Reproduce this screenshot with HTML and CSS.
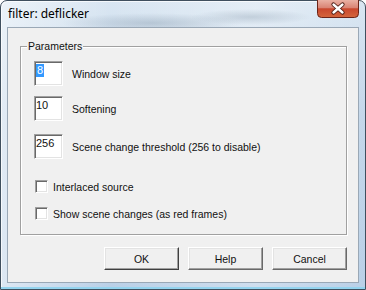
FILE: index.html
```html
<!DOCTYPE html>
<html lang="en">
<head>
  <meta charset="UTF-8" />
  <title>filter: deflicker</title>
  <link rel="stylesheet" href="styles.css">
</head>
<body>
  <div class="window">
    <div class="titlebar">
      <span class="title">filter: deflicker</span>
      <div class="close">
        <svg width="42" height="18" viewBox="0 0 42 18">
          <defs>
            <linearGradient id="red" x1="0" y1="0" x2="0" y2="1">
              <stop offset="0" stop-color="#eab1a4" />
              <stop offset="0.45" stop-color="#d98373" />
              <stop offset="0.5" stop-color="#c9472e" />
              <stop offset="1" stop-color="#d4663c" />
            </linearGradient>
          </defs>
          <path d="M0.5 0 V13.5 Q0.5 17.5 4.5 17.5 H37.5 Q41.5 17.5 41.5 13.5 V0" fill="url(#red)" stroke="#6b2418" />
          <path d="M16.5 4.5 L25.5 12.5 M25.5 4.5 L16.5 12.5" stroke="#4a1a12" stroke-width="4.2" stroke-linecap="round" fill="none" />
          <path d="M16.5 4.5 L25.5 12.5 M25.5 4.5 L16.5 12.5" stroke="#ffffff" stroke-width="2.4" stroke-linecap="round" fill="none" />
        </svg>
      </div>
    </div>

    <div class="client">
      <div class="group">
        <span class="legend">Parameters</span>

        <div class="row row-first">
          <div class="edit"><span class="sel">8</span></div>
          <span class="label">Window size</span>
        </div>
        <div class="row row-second">
          <div class="edit">10</div>
          <span class="label">Softening</span>
        </div>
        <div class="row row-third">
          <div class="edit">256</div>
          <span class="label">Scene change threshold (256 to disable)</span>
        </div>

        <div class="check check-first">
          <div class="box"></div>
          <span>Interlaced source</span>
        </div>
        <div class="check check-second">
          <div class="box"></div>
          <span>Show scene changes (as red frames)</span>
        </div>
      </div>

      <div class="buttons">
        <button class="button default">OK</button>
        <button class="button">Help</button>
        <button class="button">Cancel</button>
      </div>
    </div>
  </div>
</body>
</html>
```

FILE: styles.css
```css
body {
  margin: 0;
  width: 366px;
  height: 290px;
  overflow: hidden;
  font-family: 'Liberation Sans', Arial, sans-serif;
  font-size: 10.5px;
  color: #111;
}
.window {
  box-sizing: border-box;
  height: 290px;
  display: flex;
  flex-direction: column;
  border: 1px solid #3f4f5e;
  border-radius: 7px 7px 0 0;
  background:
    radial-gradient(ellipse 90px 10px at 150px 22px, rgba(120,140,160,0.35), transparent),
    radial-gradient(ellipse 60px 8px at 250px 16px, rgba(120,140,160,0.3), transparent),
    linear-gradient(to right, rgba(255,255,255,0.5), rgba(255,255,255,0) 30%, rgba(255,255,255,0.3) 70%, rgba(255,255,255,0)),
    linear-gradient(to bottom, #d9e6f2, #c4d7ea 40%, #bad0e7);
  box-shadow: inset 0 -2px 0 #93d3ee, inset 1px 1px 0 rgba(255,255,255,0.7);
}
.titlebar {
  height: 26px;
  display: flex;
  justify-content: space-between;
  align-items: flex-start;
  padding-left: 7px;
  padding-right: 6px;
}
.title {
  font-family: 'Noto Sans', 'Open Sans', sans-serif;
  font-size: 12px;
  line-height: 26px;
  color: #000;
}
.close {
  margin-top: -1px;
  height: 18px;
}
.close svg {
  display: block;
}
.client {
  box-sizing: border-box;
  height: 256px;
  margin: 0 6px;
  border: 1px solid #9aa8b6;
  background: #f0f0f0;
  display: flex;
  flex-direction: column;
}
.group {
  position: relative;
  box-sizing: border-box;
  width: 327px;
  height: 189px;
  margin: 18px 0 0 12px;
  padding: 14px 0 0 13px;
  border: 1px solid #a0a0a0;
  box-shadow: 1px 1px 0 #fff, inset 1px 1px 0 #fff;
}
.legend {
  position: absolute;
  top: -8px;
  left: 6px;
  padding: 0 1px 0 1px;
  background: #f0f0f0;
  line-height: 14px;
}
.row {
  display: flex;
  align-items: center;
}
.row-second {
  margin-top: 10px;
}
.row-third {
  margin-top: 13px;
}
.edit {
  box-sizing: border-box;
  width: 29px;
  height: 25px;
  padding: 2px 0 0 1px;
  background: #fff;
  border: 1px solid;
  border-color: #a0a0a0 #fff #fff #a0a0a0;
  box-shadow: inset 1px 1px 0 #696969, inset -1px -1px 0 #e3e3e3;
  line-height: 13px;
  font-size: 11px;
}
.sel {
  display: inline-block;
  background: #3399ff;
  color: #fff;
  padding: 0 1px;
}
.label {
  margin-left: 9px;
}
.check {
  display: flex;
  align-items: center;
  height: 13px;
  margin-left: 1px;
}
.check-first {
  margin-top: 21px;
}
.check-second {
  margin-top: 14px;
}
.box {
  box-sizing: border-box;
  width: 13px;
  height: 13px;
  margin-right: 5px;
  background: #fff;
  border: 1px solid;
  border-color: #a0a0a0 #fff #fff #a0a0a0;
  box-shadow: inset 1px 1px 0 #696969, inset -1px -1px 0 #e3e3e3;
}
.buttons {
  display: flex;
  justify-content: flex-end;
  gap: 9px;
  margin-top: 12px;
  padding-right: 11px;
}
.button {
  box-sizing: border-box;
  width: 75px;
  height: 23px;
  padding: 0;
  font-family: 'Liberation Sans', Arial, sans-serif;
  font-size: 10.5px;
  color: #111;
  background: #f0f0f0;
  border: 1px solid;
  border-color: #fff #696969 #696969 #fff;
  box-shadow: inset -1px -1px 0 #a0a0a0, inset 1px 1px 0 #e3e3e3;
}
.button.default {
  border-color: #fff #404040 #404040 #fff;
}
```
